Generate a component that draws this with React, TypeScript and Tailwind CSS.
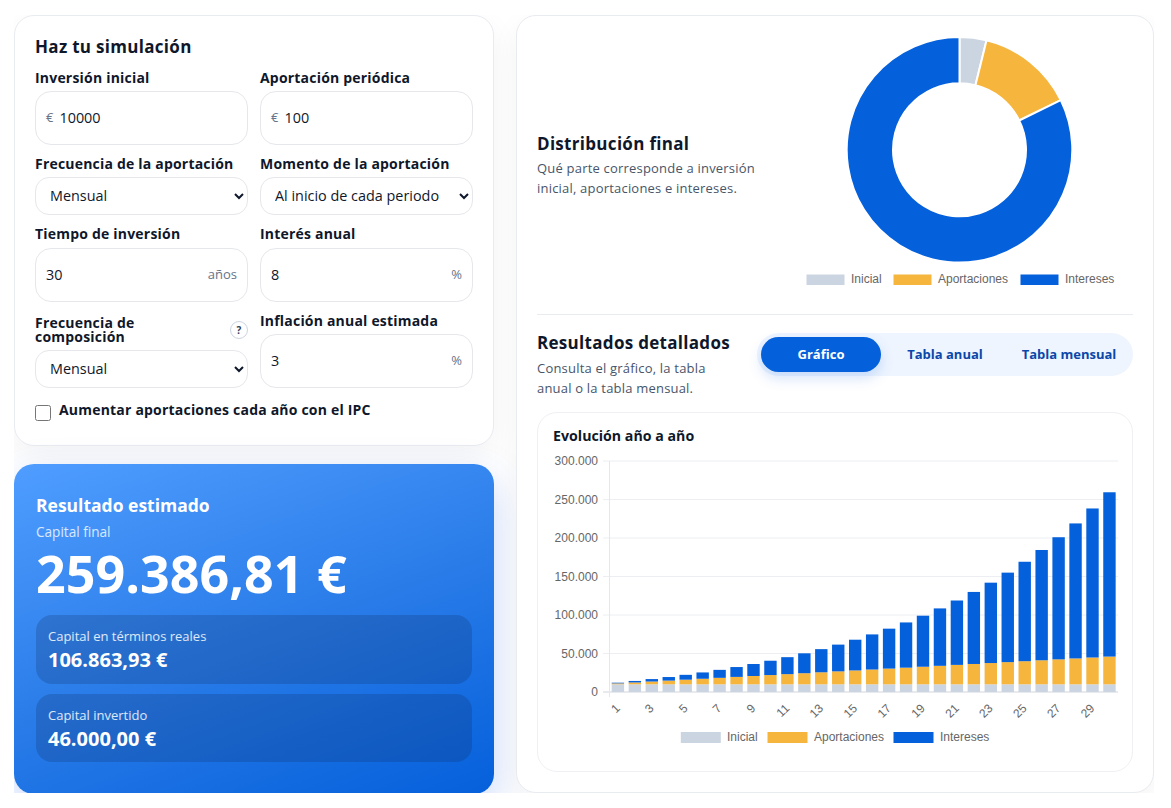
import React from 'react';

const BLUE = '#0560db';
const ORANGE = '#f6b53c';
const SLATE = '#cbd5e1';

// year by year capital: 10000 initial, 100 per month at 8% compounded monthly
function buildYears() {
  const rows: { initial: number; aport: number; total: number }[] = [];
  let capital = 10000;
  let aport = 0;
  for (let year = 1; year <= 30; year++) {
    for (let m = 0; m < 12; m++) {
      capital = (capital + 100) * (1 + 0.08 / 12);
      aport += 100;
    }
    rows.push({ initial: 10000, aport, total: capital });
  }
  return rows;
}

const years = buildYears();

const fieldClass =
  'flex items-center w-full rounded-[16px] border border-[#e5e7eb] bg-white px-[10px] h-[54px]';
const labelClass = 'block text-[14px] leading-[14px] font-bold text-[#0f172a] tracking-[0.2px]';

function Field({
  label,
  prefix,
  suffix,
  value,
  gap = 'gap-[6px]',
}: {
  label: string;
  prefix?: string;
  suffix?: string;
  value: string;
  gap?: string;
}) {
  return (
    <div className={'flex flex-col ' + gap}>
      <label className={labelClass}>{label}</label>
      <div className={fieldClass}>
        {prefix && <span className="text-[13px] text-[#64748b] mr-[6px]">{prefix}</span>}
        <input
          defaultValue={value}
          className="flex-1 min-w-0 bg-transparent outline-none text-[14.4px] text-[#0f172a]"
        />
        {suffix && <span className="text-[13px] text-[#64748b]">{suffix}</span>}
      </div>
    </div>
  );
}

function SelectBox({ value }: { value: string }) {
  return (
    <select
      defaultValue={value}
      className="w-full h-[38px] rounded-[14px] border border-[#e5e7eb] bg-white pl-[10px] pr-0 pb-[2px] text-[14.4px] text-[#0f172a] outline-none"
    >
      <option>{value}</option>
    </select>
  );
}

function SimulationForm() {
  return (
    <section className="rounded-[20px] border border-[#e8ebf0] bg-white px-[20px] pt-[20px] h-[431px] shadow-[0_10px_30px_rgba(15,23,42,0.05)]">
      <h2 className="text-[17px] leading-[22px] font-bold text-[#0f172a] tracking-[0.3px]">Haz tu simulación</h2>
      <div className="grid grid-cols-2 gap-x-[12px] mt-[13px]">
        <Field label="Inversión inicial" prefix="€" value="10000" />
        <Field label="Aportación periódica" prefix="€" value="100" />
        <div className="flex flex-col gap-[6px] mt-[12px]">
          <label className={labelClass}>Frecuencia de la aportación</label>
          <SelectBox value="Mensual" />
        </div>
        <div className="flex flex-col gap-[6px] mt-[12px]">
          <label className={labelClass}>Momento de la aportación</label>
          <SelectBox value="Al inicio de cada periodo" />
        </div>
        <div className="mt-[12px]">
          <Field label="Tiempo de inversión" suffix="años" value="30" gap="gap-[7px]" />
        </div>
        <div className="mt-[12px]">
          <Field label="Interés anual" suffix="%" value="8" gap="gap-[7px]" />
        </div>
        <div className="flex flex-col gap-[6px] mt-[14px]">
          <div className="flex items-center justify-between">
            <label className={labelClass + ' w-[130px]'}>Frecuencia de composición</label>
            <span className="flex items-center justify-center w-[18px] h-[18px] rounded-full border border-[#cbd5e1] text-[10px] font-bold text-[#334155]">
              ?
            </span>
          </div>
          <SelectBox value="Mensual" />
        </div>
        <div className="mt-[12px]">
          <Field label="Inflación anual estimada" suffix="%" value="3" />
        </div>
      </div>
      <label className="flex items-start gap-[8px] mt-[15px]">
        <input type="checkbox" className="w-[16px] h-[16px] mt-[2px]" />
        <span className="text-[14px] leading-[14px] font-bold text-[#0f172a] tracking-[0.2px]">
          Aumentar aportaciones cada año con el IPC
        </span>
      </label>
    </section>
  );
}

function ResultCard() {
  return (
    <section className="mt-[18px] h-[330px] rounded-[20px] px-[22px] pt-[30px] text-white bg-[linear-gradient(160deg,#4f9dff_0%,#2b7de9_50%,#0560db_100%)] shadow-[0_16px_40px_rgba(37,99,235,0.26)]">
      <h2 className="text-[17.5px] leading-[22px] font-bold">Resultado estimado</h2>
      <p className="text-[13.6px] leading-[20px] text-white/80 mt-[6px]">Capital final</p>
      <p className="text-[52px] leading-[60px] font-bold mt-[1px]">259.386,81 €</p>
      <div className="mt-[12px] flex flex-col gap-[10px]">
        <div className="h-[69px] rounded-[16px] bg-[rgba(15,40,90,0.22)] px-[12px] pt-[11px]">
          <p className="text-[13px] leading-[20px] text-white/85">Capital en términos reales</p>
          <p className="text-[20px] leading-[28px] font-bold">106.863,93 €</p>
        </div>
        <div className="h-[68px] rounded-[16px] bg-[rgba(15,40,90,0.22)] px-[12px] pt-[11px]">
          <p className="text-[13px] leading-[20px] text-white/85">Capital invertido</p>
          <p className="text-[20px] leading-[28px] font-bold">46.000,00 €</p>
        </div>
      </div>
    </section>
  );
}

function arc(a0: number, a1: number, r: number, ri: number, cx: number, cy: number) {
  const p = (a: number, rad: number) =>
    `${cx + rad * Math.sin(a)} ${cy - rad * Math.cos(a)}`;
  const large = a1 - a0 > Math.PI ? 1 : 0;
  return `M${p(a0, r)} A${r} ${r} 0 ${large} 1 ${p(a1, r)} L${p(a1, ri)} A${ri} ${ri} 0 ${large} 0 ${p(a0, ri)} Z`;
}

function Donut() {
  const total = 259386.81;
  const cuts = [0, 10000 / total, 46000 / total, 1].map((f) => f * Math.PI * 2);
  const colors = [SLATE, ORANGE, BLUE];
  return (
    <svg viewBox="800 30 330 260" className="w-[330px] h-[260px] shrink-0">
      {colors.map((c, i) => (
        <path key={c} d={arc(cuts[i], cuts[i + 1], 112.8, 66.5, 959.5, 149.8)} fill={c} stroke="#fff" strokeWidth="2" />
      ))}
      <g fontFamily="'Liberation Sans', sans-serif" fontSize="12" fill="#666">
        <rect x="806.5" y="274.5" width="38" height="10.5" fill={SLATE} />
        <text x="851" y="283">Inicial</text>
        <rect x="893.5" y="274.5" width="38" height="10.5" fill={ORANGE} />
        <text x="938" y="283">Aportaciones</text>
        <rect x="1020.5" y="274.5" width="38" height="10.5" fill={BLUE} />
        <text x="1065" y="283">Intereses</text>
      </g>
    </svg>
  );
}

function BarChart() {
  const y0 = 692;
  const scale = (692 - 461) / 300000;
  const ticks = [0, 50000, 100000, 150000, 200000, 250000, 300000];
  return (
    <svg viewBox="553 450 565 300" className="w-[565px] h-[300px]">
      <g fontFamily="'Liberation Sans', sans-serif" fontSize="12" fill="#666">
        {ticks.map((t) => {
          const y = y0 - t * scale;
          return (
            <g key={t}>
              <line x1="603" x2="1118" y1={y} y2={y} stroke={t === 0 ? '#d1d5db' : '#eceef1'} strokeWidth="1" />
              <text x="598" y={y + 4} textAnchor="end">
                {t === 0 ? '0' : t.toLocaleString('de-DE')}
              </text>
            </g>
          );
        })}
        <line x1="609.5" x2="609.5" y1="461" y2="697" stroke="#e5e7eb" />
        {years.map((row, i) => {
          const x = 611.7 + i * 16.95;
          const hI = row.initial * scale;
          const hA = row.aport * scale;
          const hT = row.total * scale;
          return (
            <g key={i}>
              <rect x={x} width="12.4" y={y0 - hI} height={hI} fill={SLATE} />
              <rect x={x} width="12.4" y={y0 - hI - hA} height={hA} fill={ORANGE} />
              <rect x={x} width="12.4" y={y0 - hT} height={hT - hI - hA} fill={BLUE} />
              {i % 2 === 0 && (
                <text
                  transform={`translate(${x + 3} 703) rotate(-45)`}
                  textAnchor="end"
                  dy="0.7em"
                >
                  {i + 1}
                </text>
              )}
            </g>
          );
        })}
        <rect x="680.8" y="732" width="40" height="11" fill={SLATE} />
        <text x="727" y="741">Inicial</text>
        <rect x="767.5" y="732" width="40" height="11" fill={ORANGE} />
        <text x="814" y="741">Aportaciones</text>
        <rect x="893.5" y="732" width="40" height="11" fill={BLUE} />
        <text x="940" y="741">Intereses</text>
      </g>
    </svg>
  );
}

function ResultsPanel() {
  return (
    <section className="w-[638px] h-[778px] shrink-0 rounded-[20px] border border-[#e8ebf0] bg-white px-[20px] overflow-hidden shadow-[0_10px_30px_rgba(15,23,42,0.05)]">
      <div className="flex items-start justify-between h-[299px] border-b border-[#e8ebf0]">
        <div className="pt-[116px] w-[230px]">
          <h2 className="text-[17px] leading-[24px] font-bold text-[#0f172a] tracking-[0.3px]">Distribución final</h2>
          <p className="text-[13px] leading-[20px] text-[#475569] tracking-[0.2px] mt-[2px]">
            Qué parte corresponde a inversión inicial, aportaciones e intereses.
          </p>
        </div>
        <div className="mt-[14px] mr-[3px]">
          <Donut />
        </div>
      </div>

      <div className="flex items-start justify-between mt-[18px]">
        <div className="w-[205px]">
          <h2 className="text-[17px] leading-[20px] font-bold text-[#0f172a] tracking-[0.3px]">Resultados detallados</h2>
          <p className="text-[13px] leading-[20px] text-[#475569] tracking-[0.2px] mt-[5px]">
            Consulta el gráfico, la tabla anual o la tabla mensual.
          </p>
        </div>
        <div className="flex items-center w-[376px] h-[43px] rounded-full bg-[#eef5ff] px-[4px] text-[13px] font-bold">
          <span className="flex items-center justify-center w-[120px] h-[35px] rounded-full bg-[#0560db] text-white shadow-[0_6px_14px_rgba(5,96,219,0.18)]">
            Gráfico
          </span>
          <span className="flex items-center justify-center w-[128px] text-[#0b47a8]">Tabla anual</span>
          <span className="flex items-center justify-center w-[120px] text-[#0b47a8]">Tabla mensual</span>
        </div>
      </div>

      <div className="mt-[14px] h-[360px] rounded-[20px] border border-[#eef0f4] bg-white pl-[15px] pt-[13px]">
        <h3 className="text-[14.2px] leading-[20px] font-bold text-[#0f172a] mb-[4px]">Evolución año a año</h3>
        <BarChart />
      </div>
    </section>
  );
}

export default function App() {
  return (
    <div className="w-[1171px] h-[808px] bg-white pt-[15px] pl-[14px] font-['Open_Sans',sans-serif]">
      {/* sombras recortadas por el contenedor, igual que en la captura */}
      <div className="flex gap-[22px] w-[1140px] h-[778px] overflow-hidden">
        <div className="w-[480px] shrink-0">
          <SimulationForm />
          <ResultCard />
        </div>
        <ResultsPanel />
      </div>
    </div>
  );
}
